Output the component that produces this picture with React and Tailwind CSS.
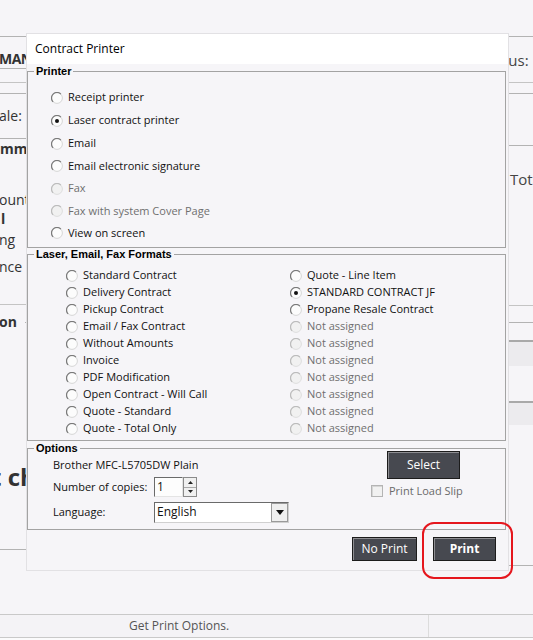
import React from "react";

const printers = [
  { label: "Receipt printer", h: "h-[23px]" },
  { label: "Laser contract printer", h: "h-[23px]", checked: true },
  { label: "Email", h: "h-[23px]" },
  { label: "Email electronic signature", h: "h-[22px]" },
  { label: "Fax", h: "h-[23px]", disabled: true },
  { label: "Fax with system Cover Page", h: "h-[22px]", disabled: true },
  { label: "View on screen", h: "h-[22px]" },
];

const leftFormats = [
  "Standard Contract",
  "Delivery Contract",
  "Pickup Contract",
  "Email / Fax Contract",
  "Without Amounts",
  "Invoice",
  "PDF Modification",
  "Open Contract - Will Call",
  "Quote - Standard",
  "Quote - Total Only",
];

const rightFormats = [
  { label: "Quote - Line Item" },
  { label: "STANDARD CONTRACT JF", checked: true },
  { label: "Propane Resale Contract" },
  ...Array.from({ length: 7 }, () => ({ label: "Not assigned", disabled: true })),
];

function Radio({ checked, disabled }) {
  return (
    <svg width="12" height="12" viewBox="0 0 12 12" className="shrink-0">
      <circle
        cx="6"
        cy="6"
        r="5.4"
        fill={disabled ? "#f1f1f1" : "#fcfcfc"}
        stroke={disabled ? "#dedede" : "#d6d6d6"}
      />
      <path
        d="M2.1 9.9A5.5 5.5 0 0 1 9.9 2.1"
        fill="none"
        stroke={disabled ? "#bcbcbc" : "#7a7a7a"}
        strokeWidth="1.2"
      />
      {checked && <circle cx="6" cy="6" r="2" fill="#111" />}
    </svg>
  );
}

function RadioItem({ label, checked, disabled, className = "" }) {
  return (
    <div className={`flex items-center gap-[5px] ${className}`}>
      <Radio checked={checked} disabled={disabled} />
      <span className={disabled ? "text-[#6f6f6f]" : "text-[#111]"}>{label}</span>
    </div>
  );
}

function Legend({ children }) {
  return (
    <legend className="ml-[6px] px-[2px] font-['Liberation_Sans',sans-serif] text-[11px] font-bold leading-[13px] text-black">
      {children}
    </legend>
  );
}

function DarkButton({ children, className = "" }) {
  return (
    <button
      className={`flex items-center justify-center bg-[#474950] text-[12px] text-white border border-[#1c1c1c] shadow-[inset_1px_1px_0_#8e8e92] ${className}`}
    >
      {children}
    </button>
  );
}

function Triangle({ up }) {
  return (
    <svg width="5" height="3" viewBox="0 0 5 3">
      <path d={up ? "M2.5 0L5 3H0Z" : "M0 0H5L2.5 3Z"} fill="#222" />
    </svg>
  );
}

export default function App() {
  return (
    <div className="relative w-[533px] h-[640px] overflow-hidden bg-[#f6f5f8] font-['Open_Sans',sans-serif] text-[11px]">
      {/* Background window */}
      <div className="flex flex-col h-full">
        <div className="flex h-[614px]">
          {/* left strip */}
          <div className="w-[26px] overflow-hidden whitespace-nowrap text-[#333] flex flex-col">
            <div className="h-[37px] shrink-0 border-b border-[#b3b3b3]" />
            <div className="h-[32px] shrink-0 border-b border-[#b3b3b3] pt-[14px] text-[14px] font-bold leading-[16px] -ml-[1px] tracking-[-0.5px]">
              MANAGER
            </div>
            <div className="h-[14px] shrink-0 border-b border-[#c4c4c4]" />
            <div className="h-[11px] shrink-0 border-b border-[#b3b3b3]" />
            <div className="h-[45px] shrink-0 border-b border-[#b3b3b3] pt-[14px] text-[14px] leading-[16px] -ml-[1px]">
              ale:
            </div>
            <div className="h-[166px] shrink-0 border-b border-[#c4c4c4] flex flex-col text-[14px] leading-[16px]">
              <div className="mt-[2px] font-bold">mm</div>
              <div className="mt-[35px] -ml-[1px]">ount</div>
              <div className="mt-[3px] font-bold pl-[1px]">l</div>
              <div className="mt-[5px] -ml-[1px]">ng</div>
              <div className="mt-[11px] -ml-[1px]">nce</div>
            </div>
            <div className="flex items-center gap-[8px] mt-[9px] text-[14px] font-bold leading-[16px]">
              <span className="-ml-[1px]">on</span>
              <div className="flex-1 border-t border-[#b3b3b3]" />
            </div>
            <div className="mt-[132px] text-[24px] font-bold leading-[30px] -ml-[9px]">t ch</div>
            <div className="mt-[57px] border-b border-[#b3b3b3]" />
          </div>

          <div className="flex-1" />

          {/* right strip */}
          <div className="w-[24px] overflow-hidden whitespace-nowrap text-[#444] flex flex-col">
            <div className="h-[37px] shrink-0 border-b border-[#b3b3b3]" />
            <div className="h-[46px] shrink-0 border-b border-[#c4c4c4] pt-[14px] text-[15px] leading-[18px] -ml-[6px]">
              tus:
            </div>
            <div className="h-[11px] shrink-0 border-b border-[#b3b3b3]" />
            <div className="h-[52px] shrink-0 border-b border-[#b3b3b3]" />
            <div className="h-[160px] shrink-0 border-b border-[#c4c4c4] pt-[24px] text-[15px] leading-[18px] pl-[1px]">
              Total
            </div>
            <div className="h-[17px] shrink-0 border-b border-[#b3b3b3]" />
            <div className="h-[17px] shrink-0" />
            <div className="h-[26px] shrink-0 border-t-2 border-[#a9a9a9] bg-[#ecebee]" />
            <div className="h-[35px] shrink-0" />
            <div className="h-[24px] shrink-0 border-t-2 border-[#a9a9a9] bg-[#ecebee]" />
            <div className="h-[141px] shrink-0 border-b border-[#b3b3b3]" />
          </div>
        </div>

        {/* status bar */}
        <div className="flex h-[24px] border-y border-[#c9c9c9] bg-[#f4f3f6] text-[12px] text-[#555]">
          <div className="w-[429px] border-r border-[#dcdcdc] pl-[129px] leading-[22px]">
            Get Print Options.
          </div>
          <div className="flex-1" />
        </div>
        <div className="flex-1 bg-[#fbfbfc]" />
      </div>

      {/* Dialog */}
      <div className="absolute left-[26px] top-[33px] w-[483px] h-[538px] flex flex-col bg-[#f6f5f8] border border-[#e2e1e4]">
        <div className="h-[30px] shrink-0 bg-white flex items-center pl-[8px] text-[12px] text-black">
          Contract Printer
        </div>

        <fieldset className="mt-[1px] mr-[2px] border border-[#a3a3a3]">
          <Legend>Printer</Legend>
          <div className="pt-[8px] pb-[3px] pl-[23px]">
            {printers.map((p) => (
              <RadioItem
                key={p.label}
                label={p.label}
                checked={p.checked}
                disabled={p.disabled}
                className={p.h}
              />
            ))}
          </div>
        </fieldset>

        <fieldset className="mr-[2px] border border-[#a3a3a3]">
          <Legend>Laser, Email, Fax Formats</Legend>
          <div className="pt-[6px] pb-[3px] pl-[38px] grid grid-cols-[224px_1fr] grid-flow-col grid-rows-10">
            {leftFormats.map((label) => (
              <RadioItem key={label} label={label} className="h-[17px]" />
            ))}
            {rightFormats.map((f, i) => (
              <RadioItem
                key={i}
                label={f.label}
                checked={f.checked}
                disabled={f.disabled}
                className="h-[17px]"
              />
            ))}
          </div>
        </fieldset>

        <fieldset className="mt-[1px] mr-[2px] border border-[#a3a3a3]">
          <Legend>Options</Legend>
          <div className="flex pb-[6px] pl-[25px] text-[#111]">
            <div className="w-[318px] flex flex-col">
              <div className="mt-[2px] leading-[16px]">Brother MFC-L5705DW Plain</div>
              <div className="mt-[4px] flex items-center h-[20px]">
                <span className="w-[101px]">Number of copies:</span>
                <div className="flex h-[20px]">
                  <div className="w-[29px] h-full bg-[#fdfdfd] border border-t-[#6a6a6a] border-l-[#6a6a6a] border-r-[#e4e4e4] border-b-[#e4e4e4] pl-[2px] text-[12px] leading-[17px]">
                    1
                  </div>
                  <div className="w-[14px] h-full flex flex-col border border-[#8a8a8a] bg-[#f0f0f0]">
                    <div className="flex-1 flex items-center justify-center border-b border-[#a8a8a8]">
                      <Triangle up />
                    </div>
                    <div className="flex-1 flex items-center justify-center">
                      <Triangle />
                    </div>
                  </div>
                </div>
              </div>
              <div className="mt-[5px] flex items-center h-[21px]">
                <span className="w-[101px]">Language:</span>
                <div className="flex w-[135px] h-[21px] bg-white border border-t-[#6a6a6a] border-l-[#6a6a6a] border-r-[#d0d0d0] border-b-[#d0d0d0]">
                  <div className="flex-1 pl-[2px] text-[12px] leading-[18px]">English</div>
                  <div className="w-[17px] h-full flex items-center justify-center bg-[#efefef] border border-[#9a9a9a]">
                    <svg width="8" height="5" viewBox="0 0 8 5">
                      <path d="M0 0H8L4 5Z" fill="#111" />
                    </svg>
                  </div>
                </div>
              </div>
            </div>
            <div className="-mt-[4px] flex flex-col">
              <DarkButton className="ml-[16px] w-[73px] h-[28px]">Select</DarkButton>
              <div className="mt-[6px] flex items-center gap-[6px] h-[12px]">
                <div className="w-[12px] h-[12px] bg-[#f1f1f1] border border-[#b4b4b4] shadow-[inset_1px_1px_0_#d6d6d6]" />
                <span className="text-[#6a6a6a]">Print Load Slip</span>
              </div>
            </div>
          </div>
        </fieldset>

        <div className="mt-[7px] mr-[12px] flex justify-end items-start gap-[16px]">
          <DarkButton className="w-[65px] h-[24px]">No Print</DarkButton>
          <DarkButton className="w-[63px] h-[24px] font-bold">Print</DarkButton>
        </div>
      </div>

      {/* annotation */}
      <div className="absolute left-[422px] top-[522px] w-[91px] h-[57px] border-2 border-[#e5161d] rounded-[12px]" />
    </div>
  );
}
